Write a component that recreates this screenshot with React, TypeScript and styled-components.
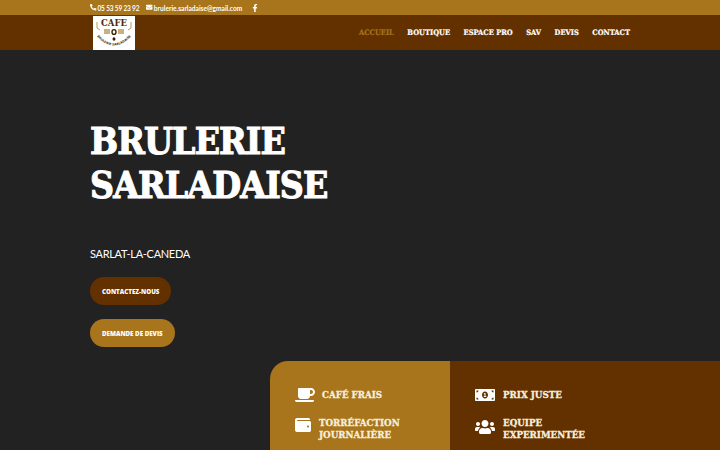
import React from "react";
import styled, { createGlobalStyle } from "styled-components";
import { FaPhoneAlt, FaEnvelope, FaFacebookF, FaCoffee, FaWallet, FaMoneyBillAlt, FaUsers } from "react-icons/fa";

const Global = createGlobalStyle`
  html, body { margin: 0; padding: 0; background: #222222; overflow: hidden; }
  body { font-family: Lato, "Open Sans", "Liberation Sans", sans-serif; }
  * { box-sizing: border-box; }
`;
const display = `"DejaVu Serif Condensed", "DejaVu Serif", "Liberation Serif", serif`;
const brown = "#633000";
const gold = "#a8741c";

const Page = styled.div`
  width: 720px;
  height: 450px;
  overflow: hidden;
  display: flex;
  flex-direction: column;
  background: #222222;
`;
const TopBar = styled.div`
  height: 15px;
  flex: none;
  background: ${gold};
  display: flex;
  align-items: center;
  padding-left: 90px;
  color: #fff;
  font-size: 6.6px;
  font-weight: 700;
`;
const TopItem = styled.span<{ $tight?: boolean }>`
  display: inline-flex;
  align-items: center;
  gap: 1px;
  margin-right: 7px;
  letter-spacing: ${(p) => (p.$tight ? "-0.2px" : "0")};
  svg { font-size: 6.5px; }
`;
const FbLink = styled.span`
  display: inline-flex;
  margin-left: 2px;
  svg { font-size: 8px; }
`;
const NavBar = styled.header`
  height: 35px;
  flex: none;
  background: ${brown};
  display: flex;
  align-items: center;
  justify-content: space-between;
  padding: 0 90px 0 93px;
`;
const Logo = styled.svg`
  display: block;
  width: 42px;
  height: 34px;
  margin-top: 1px;
`;
const Menu = styled.nav`
  display: flex;
  gap: 13.5px;
`;
const MenuItem = styled.span<{ $active?: boolean }>`
  font-family: ${display};
  font-weight: 700;
  font-size: 7.5px;
  color: ${(p) => (p.$active ? gold : "#fff")};
  -webkit-text-stroke: 0.2px ${(p) => (p.$active ? gold : "#fff")};
`;
const Hero = styled.main`
  flex: 1;
  padding: 69px 0 0 90px;
  display: flex;
  flex-direction: column;
  align-items: flex-start;
`;
const Title = styled.h1`
  margin: 0;
  font-family: ${display};
  font-weight: 700;
  font-size: 37px;
  line-height: 44px;
  color: #fff;
  letter-spacing: -0.9px;
  -webkit-text-stroke: 1px #fff;
`;
const Place = styled.div`
  margin-top: 40px;
  font-size: 11px;
  line-height: 14px;
  letter-spacing: -0.3px;
  color: #fff;
`;
const Cta = styled.a<{ $tone: string; $first?: boolean }>`
  display: flex;
  align-items: center;
  height: 28px;
  padding: 0 12px;
  border-radius: 14px;
  background: ${(p) => p.$tone};
  color: #fff;
  font-family: "Open Sans", sans-serif;
  font-size: 6.2px;
  font-weight: 800;
  margin-top: ${(p) => (p.$first ? "16px" : "14px")};
`;
const Features = styled.section`
  margin-top: 14px;
  margin-left: 180px;
  display: grid;
  grid-template-columns: 180px 270px;
  height: 89px;
  flex: none;
`;
const Panel = styled.div<{ $tone: string; $round?: boolean }>`
  background: ${(p) => p.$tone};
  border-top-left-radius: ${(p) => (p.$round ? "18px" : "0")};
  padding: 24px 0 0 25px;
  display: flex;
  flex-direction: column;
  gap: 12px;
`;
const Feature = styled.div<{ $gap: number; $top?: boolean }>`
  display: flex;
  align-items: ${(p) => (p.$top ? "flex-start" : "center")};
  color: #fff;
  gap: ${(p) => p.$gap}px;
`;
const IconBox = styled.span<{ $size: number }>`
  display: inline-flex;
  justify-content: center;
  font-size: ${(p) => p.$size}px;
`;
const FeatureText = styled.span`
  font-family: ${display};
  font-weight: 700;
  font-size: 9.7px;
  line-height: 12px;
  color: #f5eedd;
  -webkit-text-stroke: 0.3px #f5eedd;
`;

export default function App() {
  return (
    <Page>
      <Global />
      <TopBar>
        <TopItem $tight><FaPhoneAlt />05 53 59 23 92</TopItem>
        <TopItem><FaEnvelope />brulerie.sarladaise@gmail.com</TopItem>
        <FbLink><FaFacebookF /></FbLink>
      </TopBar>
      <NavBar>
        <Logo viewBox="0 0 42 34">
          <rect width="42" height="34" fill="#fff" />
          <text x="21" y="10" textAnchor="middle" fontFamily="'DejaVu Serif', serif" fontWeight="700" fontSize="8.5" fill="#4a2a0c">CAFE</text>
          <path d="M4 6v6l3 2M38 6v6l-3 2" stroke="#b89a5a" fill="none" />
          <rect x="11" y="13" width="6" height="5" fill="#c9b27a" />
          <rect x="25" y="13" width="6" height="5" fill="#c9b27a" />
          <ellipse cx="21" cy="16" rx="2" ry="2.4" fill="none" stroke="#3a2006" strokeWidth="1.4" />
          <ellipse cx="21" cy="23" rx="1.5" ry="1.8" fill="#3a2006" />
          <path id="arc" d="M1 17 Q21 42 41 17" fill="none" />
          <text fontFamily="'DejaVu Sans', sans-serif" fontWeight="700" fontSize="3.1" fill="#4a2a0c" textAnchor="middle">
            <textPath href="#arc" startOffset="50%">BRULERIE SARLADAISE</textPath>
          </text>
        </Logo>
        <Menu>
          <MenuItem $active>ACCUEIL</MenuItem>
          <MenuItem>BOUTIQUE</MenuItem>
          <MenuItem>ESPACE PRO</MenuItem>
          <MenuItem>SAV</MenuItem>
          <MenuItem>DEVIS</MenuItem>
          <MenuItem>CONTACT</MenuItem>
        </Menu>
      </NavBar>
      <Hero>
        <Title>BRULERIE<br />SARLADAISE</Title>
        <Place>SARLAT-LA-CANEDA</Place>
        <Cta $tone={brown} $first>CONTACTEZ-NOUS</Cta>
        <Cta $tone={gold}>DEMANDE DE DEVIS</Cta>
        <Features>
          <Panel $tone={gold} $round>
            <Feature $gap={7}><IconBox $size={20}><FaCoffee /></IconBox><FeatureText>CAFÉ FRAIS</FeatureText></Feature>
            <Feature $gap={8} $top><IconBox $size={16}><FaWallet /></IconBox><FeatureText>TORRÉFACTION<br />JOURNALIÈRE</FeatureText></Feature>
          </Panel>
          <Panel $tone={brown}>
            <Feature $gap={8}><IconBox $size={20}><FaMoneyBillAlt /></IconBox><FeatureText>PRIX JUSTE</FeatureText></Feature>
            <Feature $gap={8} $top><IconBox $size={20}><FaUsers /></IconBox><FeatureText>EQUIPE<br />EXPERIMENTÉE</FeatureText></Feature>
          </Panel>
        </Features>
      </Hero>
    </Page>
  );
}
